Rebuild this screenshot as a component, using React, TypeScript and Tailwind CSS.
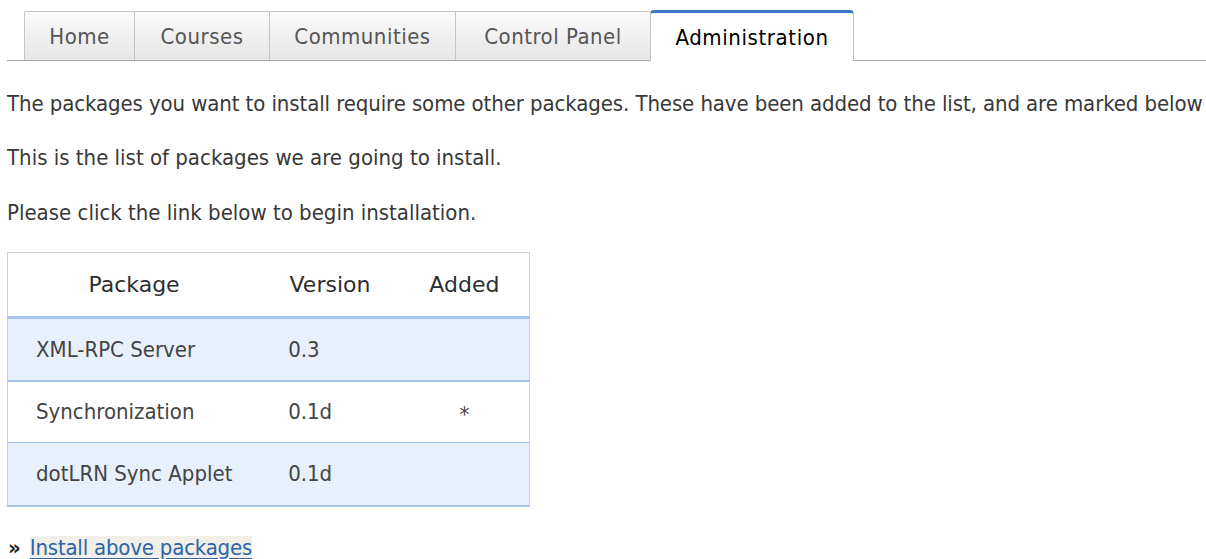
import React from "react";

const tabs = [
  { label: "Home", w: "w-[111px]" },
  { label: "Courses", w: "w-[136px]" },
  { label: "Communities", w: "w-[187px]" },
  { label: "Control Panel", w: "w-[196px]" },
];

const rows = [
  { name: "XML-RPC Server", version: "0.3", added: "", odd: true },
  { name: "Synchronization", version: "0.1d", added: "*", odd: false },
  { name: "dotLRN Sync Applet", version: "0.1d", added: "", odd: true },
];

const headFont = { fontFamily: '"DejaVu Sans", Verdana, sans-serif' };

export default function App() {
  return (
    <div
      className="h-[559px] w-full overflow-hidden bg-white text-[#383838] text-[22px]"
      style={{ fontFamily: '"DejaVu Sans Condensed", "DejaVu Sans", Tahoma, sans-serif' }}
    >
      {/* tab strip */}
      <div className="pl-[7px] pt-[10px]">
        <div className="flex h-[51px] items-end border-b border-[#a8a8a8] pl-[17px]">
          {tabs.map((t) => (
            <div
              key={t.label}
              className={`${t.w} flex h-[49px] items-center justify-center border border-b-0 border-[#c4c4c4] bg-gradient-to-b from-[#fbfbfb] to-[#e6e6e6] text-[#555] tracking-[0.5px] -mr-px rounded-t-[2px]`}
            >
              {t.label}
            </div>
          ))}
          <div className="-mb-px flex h-[51px] w-[204px] items-center justify-center rounded-t-[4px] border border-b-0 border-[#c4c4c4] border-t-[3px] border-t-[#3a78c3] bg-white text-black tracking-[0.6px]">
            Administration
          </div>
        </div>
      </div>

      <div className="px-[7px] pt-[29px]">
        <p className="mb-[27px] leading-[27px] whitespace-nowrap tracking-[-0.1px]">
          The packages you want to install require some other packages. These have been added to the list, and are marked below
        </p>
        <p className="mb-[28px] leading-[27px]">This is the list of packages we are going to install.</p>
        <p className="mb-[26px] leading-[27px]">Please click the link below to begin installation.</p>

        <table className="w-[523px] border-collapse border-x border-t border-[#d2d2d2] text-[22px]">
          <colgroup>
            <col className="w-[253px]" />
            <col className="w-[140px]" />
            <col className="w-[130px]" />
          </colgroup>
          <thead>
            <tr className="h-[65px] border-b-[3px] border-[#a8c3ec] bg-white" style={headFont}>
              <th className="font-normal text-center text-[#2e2e2e]">Package</th>
              <th className="font-normal text-center text-[#2e2e2e]">Version</th>
              <th className="font-normal text-center text-[#2e2e2e]">Added</th>
            </tr>
          </thead>
          <tbody>
            {rows.map((r) => (
              <tr
                key={r.name}
                className={
                  r.odd
                    ? "h-[63px] border-b-2 border-[#a8c3ec] bg-[#e9f0fd]"
                    : "h-[62px] border-b border-[#a8c3ec] bg-white"
                }
              >
                <td className="pl-[28px] text-[#444]">{r.name}</td>
                <td className="pl-[28px] text-[#444]">{r.version}</td>
                <td className="text-center text-[#444] align-top pt-[16px]">{r.added}</td>
              </tr>
            ))}
          </tbody>
        </table>

        <div className="mt-[29px] flex items-center leading-[24px]">
          <span className="mr-[9px] pl-px font-bold text-[#222]">»</span>
          <a href="#" className="bg-[#f1efe7] text-[#2c64ab] underline underline-offset-[3px] tracking-[-0.2px]">
            Install above packages
          </a>
        </div>
      </div>
    </div>
  );
}
